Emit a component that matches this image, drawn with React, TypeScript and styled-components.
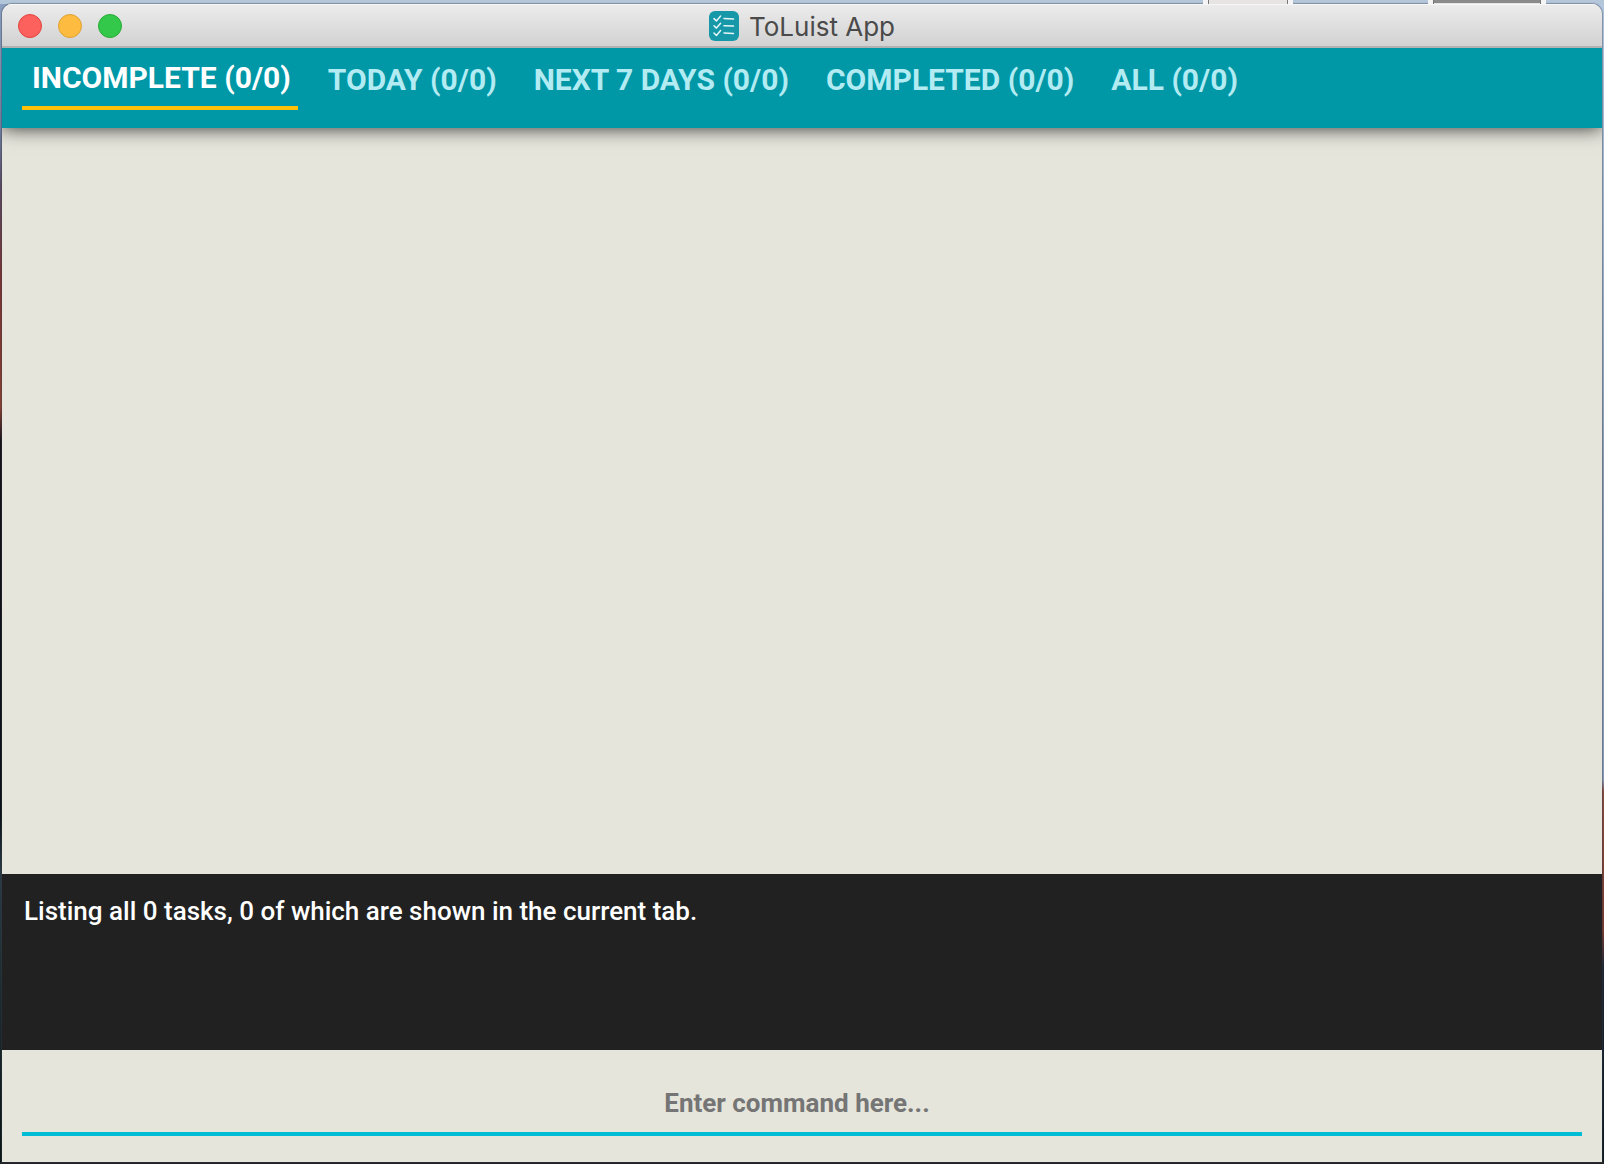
import React, { useState } from "react";
import styled, { createGlobalStyle } from "styled-components";

const GlobalStyle = createGlobalStyle`
  *, *::before, *::after { box-sizing: border-box; }
  body { margin: 0; font-family: Roboto, "Liberation Sans", sans-serif; }
`;

const Desktop = styled.div`
  min-height: 100vh;
  display: flex;
  flex-direction: column;
  padding: 4px 2px 2px;
  background:
    linear-gradient(#222222, #222222) bottom / 100% 2px no-repeat,
    linear-gradient(#b3c6da, #b3c6da) top / 100% 4px no-repeat,
    linear-gradient(#8da3c3 0%, #6f7fa0 11%, #5a4a62 16%, #7c3430 24%, #8a4030 35%, #141016 38%, #0a1016 70%, #2b3b43 75%, #0a1414 100%) left / 50% 100% no-repeat,
    linear-gradient(#b3c8e0 0%, #8e9fb8 40%, #8a9cb8 67%, #8a4a40 68%, #7c3a2c 80%, #1c2433 83%, #0d1820 100%) right / 50% 100% no-repeat;
`;

const DesktopFile = styled.span<{ $left: number; $width: number; $fill: string }>`
  position: absolute;
  top: 0;
  left: ${(p) => p.$left}%;
  width: ${(p) => p.$width}px;
  height: 4px;
  background: ${(p) => p.$fill};
  border: solid #f4f4f4;
  border-width: 0 5px;
  box-shadow: inset 1px 0 #777777, inset -1px 0 #777777;
`;

const Window = styled.div`
  flex: 1;
  display: flex;
  flex-direction: column;
  border-radius: 10px 10px 0 0;
  overflow: hidden;
  background: #e5e5dc;
  box-shadow: 0 0 1px 1px rgba(50, 60, 75, 0.4);
`;

const TitleBar = styled.header`
  position: relative;
  z-index: 1;
  height: 44px;
  flex: none;
  display: grid;
  grid-template-columns: 1fr auto 1fr;
  align-items: center;
  padding: 2px 16px 0;
  background: linear-gradient(#ececec, #d2d2d2);
  border-bottom: 2px solid #b2b2b2;
  box-shadow: inset 0 1px #f7f7f7;
`;

const Lights = styled.div`
  display: flex;
  gap: 16px;
`;

const Light = styled.button<{ $fill: string; $edge: string }>`
  width: 24px;
  height: 24px;
  padding: 0;
  border-radius: 50%;
  border: 1px solid ${(p) => p.$edge};
  background: ${(p) => p.$fill};
`;

const Title = styled.h1`
  display: flex;
  align-items: center;
  gap: 10px;
  margin: 0;
  font: 400 26px/32px Inter, "Liberation Sans", sans-serif;
  color: #4a4a4a;
`;

const TitleText = styled.span`
  padding-top: 2px;
`;

const TabBar = styled.nav`
  position: relative;
  height: 80px;
  flex: none;
  display: flex;
  align-items: flex-start;
  gap: 20px;
  padding: 10px 20px;
  background: #0097a7;
  box-shadow: 0 0 18px rgba(0, 0, 0, 0.8);
`;

const Tab = styled.button<{ $active: boolean }>`
  display: flex;
  align-items: flex-start;
  height: 52px;
  padding: ${(p) => (p.$active ? "2px" : "4px")} 7px 0 10px;
  border: 0;
  border-bottom: 4px solid ${(p) => (p.$active ? "#ffc107" : "transparent")};
  background: none;
  color: ${(p) => (p.$active ? "#ffffff" : "#b2ebf2")};
  font: 700 30px/36px Roboto, "Liberation Sans", sans-serif;
  text-transform: uppercase;
  white-space: nowrap;
`;

const TaskList = styled.main`
  flex: 1;
`;

const Result = styled.section`
  min-height: 176px;
  padding: 20px 22px;
  background: #212121;
  color: #ffffff;
  font: 500 26px/34px Roboto, "Liberation Sans", sans-serif;
`;

const CommandBar = styled.form`
  height: 112px;
  flex: none;
  padding: 26px 20px;
`;

const CommandInput = styled.input`
  display: block;
  width: 100%;
  height: 60px;
  padding: 0 10px 2px 0;
  border: 0;
  border-bottom: 4px solid #00bcd4;
  border-radius: 0;
  outline: none;
  background: none;
  color: #212121;
  font: 700 26px/32px Roboto, "Liberation Sans", sans-serif;
  text-align: center;
  &::placeholder {
    color: #757575;
    opacity: 1;
  }
`;

const AppIcon = () => (
  <svg width="30" height="30" viewBox="0 0 30 30" fill="none" stroke="#e6f6f7" strokeLinecap="round" strokeLinejoin="round" aria-hidden="true">
    <rect width="30" height="30" rx="6" fill="#1798a8" stroke="none" />
    <g strokeWidth="1.5">
      <path d="M5 7.6l2.4 2.3L11.6 5" />
      <path d="M5 14.8l2.4 2.3 4.2-4.9" />
      <path d="M5 22l2.4 2.5 4.2-5" />
      <path d="M15 7.6l9.5.5M15 14.7l9.5.4M15 21.9l9.5.6" />
    </g>
  </svg>
);

const filters = ["Incomplete", "Today", "Next 7 days", "Completed", "All"];

export default function App() {
  const [active, setActive] = useState(filters[0]);
  const [command, setCommand] = useState("");
  return (
    <Desktop>
      <GlobalStyle />
      <DesktopFile $left={75} $width={90} $fill="#e8e4e4" />
      <DesktopFile $left={89} $width={118} $fill="linear-gradient(#8a8a8a 3px, #e4e4e4 3px)" />
      <Window>
        <TitleBar>
          <Lights>
            <Light type="button" aria-label="Close" $fill="#fc615d" $edge="#e0443e" />
            <Light type="button" aria-label="Minimize" $fill="#fdbc40" $edge="#dea034" />
            <Light type="button" aria-label="Zoom" $fill="#34c84a" $edge="#27aa35" />
          </Lights>
          <Title>
            <AppIcon />
            <TitleText>ToLuist App</TitleText>
          </Title>
        </TitleBar>
        <TabBar>
          {filters.map((name) => (
            <Tab key={name} type="button" $active={name === active} onClick={() => setActive(name)}>
              {name} (0/0)
            </Tab>
          ))}
        </TabBar>
        <TaskList />
        <Result>Listing all 0 tasks, 0 of which are shown in the current tab.</Result>
        <CommandBar onSubmit={(e) => e.preventDefault()}>
          <CommandInput
            aria-label="Command"
            placeholder="Enter command here..."
            value={command}
            onChange={(e) => setCommand(e.target.value)}
          />
        </CommandBar>
      </Window>
    </Desktop>
  );
}
